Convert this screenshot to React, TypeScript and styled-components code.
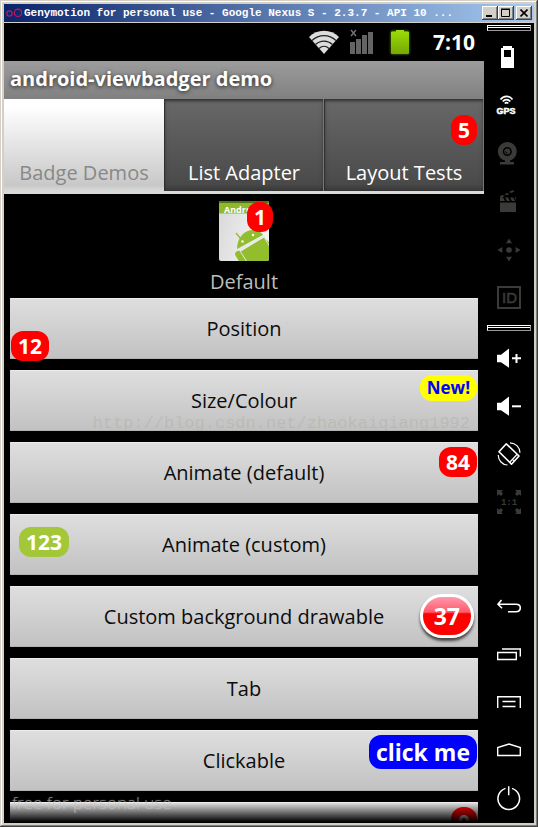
import React from "react";
import styled, { createGlobalStyle, css } from "styled-components";

const GlobalStyle = createGlobalStyle`
  *, *::before, *::after { box-sizing: border-box; }
  body { margin: 0; background: #000; }
  button { margin: 0; padding: 0; border: 0; font: inherit; color: inherit; background: none; cursor: pointer; }
`;

const droid = `"Open Sans", "Noto Sans", sans-serif`;

/* ---------- window frame ---------- */

const Frame = styled.div`
  display: flex;
  flex-direction: column;
  height: 100vh;
  padding: 4px;
  overflow: hidden;
  background: #d4d0c8;
  box-shadow: inset -1px -1px #404040, inset 1px 1px #d4d0c8, inset -2px -2px #808080, inset 2px 2px #fff;
  font-family: ${droid};
`;

const TitleBar = styled.header`
  display: flex;
  align-items: center;
  flex: none;
  height: 18px;
  margin-bottom: 1px;
  padding: 0 2px;
  background: linear-gradient(90deg, #0a246a, #a6caf0);
`;

const WindowTitle = styled.h1`
  flex: 1;
  min-width: 0;
  margin: 0 0 0 1px;
  overflow: hidden;
  white-space: nowrap;
  color: #fff;
  font: bold 11px/18px "Liberation Mono", monospace;
`;

const WindowButton = styled.button<{ $apart?: boolean }>`
  display: grid;
  place-items: center;
  flex: none;
  width: 16px;
  height: 14px;
  margin-left: ${(p) => (p.$apart ? "2px" : "0")};
  background: #d4d0c8;
  box-shadow: inset -1px -1px #404040, inset 1px 1px #fff, inset -2px -2px #808080;
`;

const Client = styled.div`
  display: flex;
  flex: 1;
  min-height: 0;
  background: #000;
`;

/* ---------- phone screen ---------- */

const Screen = styled.main`
  position: relative;
  display: flex;
  flex-direction: column;
  flex: 1;
  min-width: 0;
  overflow: hidden;
`;

const StatusBar = styled.div`
  display: flex;
  align-items: center;
  justify-content: flex-end;
  flex: none;
  height: 38px;
  padding-right: 9px;
`;

const StatusIcon = styled.svg<{ $gap: number }>`
  flex: none;
  margin-right: ${(p) => p.$gap}px;
  overflow: visible;
`;

const Clock = styled.time`
  color: #fff;
  font-size: 21px;
  line-height: 38px;
  font-weight: 700;
`;

const AppTitle = styled.h2`
  flex: none;
  height: 38px;
  margin: 0;
  padding: 0 6px;
  background: linear-gradient(#9c9c9c, #808080);
  color: #fff;
  font-size: 20px;
  line-height: 36px;
  font-weight: 700;
  text-shadow: 0 1px 4px rgba(0, 0, 0, 0.75);
`;

const TabStrip = styled.div`
  display: grid;
  grid-template-columns: repeat(3, 1fr);
  flex: none;
  height: 95px;
  border-bottom: 3px solid #d8dad8;
`;

const TabCell = styled.div`
  position: relative;
  display: grid;
`;

const TabButton = styled.button<{ $active?: boolean }>`
  display: flex;
  align-items: flex-end;
  justify-content: center;
  padding-bottom: 4px;
  font-size: 20px;
  line-height: 28px;
  white-space: nowrap;
  ${(p) =>
    p.$active
      ? css`
          background: linear-gradient(#fff 8%, #c8c8c8 94%, #d8dad8);
          color: #888;
        `
      : css`
          background: linear-gradient(#686868, #484848);
          box-shadow: inset 1px 0 #303030, inset -1px 0 #777, inset 0 2px 3px #303030, inset 0 -4px 6px -2px #303030;
          color: #fff;
        `}
`;

const List = styled.div`
  display: flex;
  flex-direction: column;
  gap: 11px;
  flex: 1;
  min-height: 0;
  padding: 7px 6px 0;
  overflow: hidden;
`;

const DefaultItem = styled.div`
  display: flex;
  flex-direction: column;
  align-items: center;
  flex: none;
  height: 86px;
`;

const IconHolder = styled.div`
  position: relative;
  width: 50px;
  height: 60px;
`;

const DefaultLabel = styled.div`
  margin-top: 6px;
  color: #bebebe;
  font-size: 20px;
  line-height: 30px;
`;

const Row = styled.div`
  position: relative;
  display: grid;
  flex: none;
  height: 61px;
`;

const RowButton = styled.button`
  border-radius: 1px;
  background: linear-gradient(#dfdfdf, #c1c1c1);
  box-shadow: inset 0 1px #ededed, inset 0 -1px #b2b2b2;
  color: #0c0c0c;
  font-size: 20px;
  line-height: 28px;
`;

type Place = "topRight" | "bottomLeft" | "centerLeft" | "tab" | "icon" | "glossy";

const places: Record<Place, ReturnType<typeof css>> = {
  topRight: css`top: 5px; right: 1px;`,
  bottomLeft: css`bottom: -2px; left: 1px;`,
  centerLeft: css`top: 13px; left: 9px;`,
  tab: css`top: 16px; right: 7px;`,
  icon: css`top: 1px; right: -4px;`,
  glossy: css`top: 8px; right: 4px;`,
};

const badgeLook = css<{ $place: Place; $bg?: string; $ink?: string; $size?: "small" | "large" }>`
  position: absolute;
  ${(p) => places[p.$place]}
  padding: 0 7px;
  border-radius: 12px;
  background: ${(p) => p.$bg ?? "#f00"};
  color: ${(p) => p.$ink ?? "#fff"};
  font-weight: 700;
  white-space: nowrap;
  font-size: ${(p) => (p.$size === "small" ? 17 : p.$size === "large" ? 23 : 21)}px;
  line-height: ${(p) => (p.$size === "small" ? 26 : p.$size === "large" ? 34 : 30)}px;
`;

const Badge = styled.span`
  ${badgeLook}
`;

const BadgeButton = styled.button`
  ${badgeLook}
`;

const GlossyBadge = styled(Badge)`
  padding: 0 11px;
  border: 3px solid #fff;
  border-radius: 24px;
  background: linear-gradient(#ff9aac, #ff5a6c 40%, #f00 44%, #f00);
  box-shadow: 0 3px 3px rgba(0, 0, 0, 0.65);
  font-size: 23px;
  line-height: 38px;
`;

const LinkMark = styled.div`
  position: absolute;
  top: 389px;
  right: 14px;
  color: rgba(165, 168, 150, 0.35);
  font: 17px/24px "Liberation Mono", monospace;
`;

const Fade = styled.div`
  position: absolute;
  right: 0;
  bottom: 0;
  left: 0;
  height: 20px;
  background: linear-gradient(rgba(0, 0, 0, 0), #000 95%);
`;

const LicenceMark = styled.div`
  position: absolute;
  bottom: 8px;
  left: 8px;
  color: rgba(165, 165, 165, 0.55);
  font: 300 17px/24px "Open Sans", sans-serif;
  text-shadow: 0 0 1px rgba(255, 255, 255, 0.5);
`;

/* ---------- tool column ---------- */

const Tools = styled.nav`
  display: flex;
  flex-direction: column;
  flex: none;
  width: 50px;
  padding: 2px 3px 1px;
  color: #fff;
`;

const Grip = styled.div`
  flex: none;
  height: 6px;
  border: 1px solid #999;
  border-top-color: #fff;
  border-left-color: #fff;
  background: linear-gradient(#000 1px, #fff 1px, #fff 2px, #000 2px);
`;

const ToolGroup = styled.div<{ $bottom?: boolean }>`
  display: flex;
  flex-direction: column;
  flex: none;
  padding: ${(p) => (p.$bottom ? "0" : "3px 0")};
  margin-top: ${(p) => (p.$bottom ? "auto" : "0")};
`;

const ToolButton = styled.button<{ $dim?: boolean }>`
  display: grid;
  place-items: center;
  height: 48px;
  color: ${(p) => (p.$dim ? "#3a3a38" : "#fff")};

  svg {
    overflow: visible;
  }
`;

const Glyph = ({ children }: { children: React.ReactNode }) => (
  <svg width="24" height="24" viewBox="0 0 24 24" fill="none" stroke="currentColor" strokeWidth="1.4" aria-hidden="true">
    {children}
  </svg>
);

const solid = { fill: "currentColor", stroke: "none" } as const;

type Tool = { name: string; dim?: boolean; art: React.ReactNode };

const sensors: Tool[] = [
  { name: "Battery", art: <path {...solid} fillRule="evenodd" d="M6 0h9v2h2v20H4V2h2zM7 4v7h7V4z" /> },
  {
    name: "GPS",
    art: (
      <>
        <path strokeWidth="1.7" d="M3.500 5.500c3-4.300 9-4.300 12 0M5.700 7.600c2-2.600 5.600-2.600 7.600 0M7.800 9.500c1-1.300 2.400-1.300 3.400 0" />
        <text {...solid} stroke="currentColor" strokeWidth="0.5" x="-0.5" y="19.500" fontSize="9" fontWeight="700" fontFamily="Liberation Sans, sans-serif">GPS</text>
      </>
    ),
  },
  {
    name: "Camera",
    dim: true,
    art: (
      <>
        <circle cx="10.300" cy="9.500" r="7" strokeWidth="5" />
        <circle {...solid} cx="10.300" cy="9.500" r="3" />
        <path stroke="#000" strokeWidth="1" d="M8.700 9.500a1.700 1.700 0 0 0 1.800 1.600" />
        <path {...solid} d="M8 17h5v3h4v2.500H3V20h5z" />
      </>
    ),
  },
  {
    name: "Capture",
    dim: true,
    art: (
      <path {...solid} d="M3 12.500h16V22H3zM3 7.500h3l2 3.500H3zM8 7.500h3l2 3.500h-3zM13 7.500h3l2 3.500h-3zM17.500 7.500H19V10zM2.500 6.500l3-1.400 2.300 1L4.500 7.800zM7.500 4.200l2.600-1.300 2.300 1-2.800 1.400zM12 2L15.500.3l2 1-3.200 1.700z" />
    ),
  },
  {
    name: "Move",
    dim: true,
    art: (
      <>
        <circle {...solid} cx="12" cy="12" r="2.800" />
        <path {...solid} d="M12 .5l3 4.800H9zM12 23.500l3-4.800H9zM.5 12l4.800-3v6zM23.500 12l-4.800-3v6z" />
      </>
    ),
  },
  {
    name: "Identifiers",
    dim: true,
    art: (
      <>
        <rect x="1" y="1" width="22" height="21" strokeWidth="2" />
        <text {...solid} stroke="currentColor" strokeWidth="0.6" x="5" y="17" fontSize="15" fontFamily="Liberation Sans, sans-serif">ID</text>
      </>
    ),
  },
];

const speaker = <path {...solid} d="M0 8.700h4L12 2.500v19.300L4 16.300H0z" />;

const actions: Tool[] = [
  { name: "Volume up", art: <>{speaker}<path strokeWidth="2" d="M15 12.300h9M19.500 8v9" /></> },
  { name: "Volume down", art: <>{speaker}<path strokeWidth="2" d="M15 12.300h9" /></> },
  {
    name: "Rotate",
    art: (
      <>
        <path strokeWidth="1.600" strokeLinejoin="round" d="M9.300 1.800L2 9.800 14.500 22.200 22 14z" />
        <path strokeWidth="1.200" d="M12.500 20.500l7.500-8M13 .8c5.800.2 10 4.600 10 10M1.200 13c.2 5.500 4 9.800 9.300 10M16 18.800l.8-.9" />
      </>
    ),
  },
  {
    name: "Pixel perfect",
    dim: true,
    art: (
      <>
        <path {...solid} d="M0 0h6L4.300 1.700 6 3.800 4 6 1.800 4.200 0 6zM24 0h-6l1.700 1.700L18 3.800 20 6l2.200-1.800L24 6zM0 24h6l-1.700-1.700L6 20.200 4 18l-2.200 1.800L0 18zM24 24h-6l1.700-1.700L18 20.200 20 18l2.200 1.800L24 18z" />
        <text {...solid} x="12" y="15" textAnchor="middle" fontSize="9" fontWeight="700" fontFamily="Liberation Mono, monospace">1:1</text>
      </>
    ),
  },
];

const keys: Tool[] = [
  { name: "Back", art: <path strokeWidth="1.600" d="M4.500 6L1 10.200l4 4M1 10.200h18c2.500 0 4.300 1.300 4.300 3.600 0 2.400-1.800 3.900-4.300 3.900h-8" /> },
  { name: "Recent apps", art: <path d="M.7 10.500h18.600v7H.7zM5 7h18.300v7.500" /> },
  { name: "Menu", art: <path d="M.7 18V6.700h22.600V18M5.500 11.500h13M5.500 16.500h13" /> },
  { name: "Home", art: <path d="M.7 17.500V9.500L12 6l11.300 3.500v8z" /> },
  { name: "Power", art: <path strokeWidth="1.500" d="M8.500 2.400a10.800 10.800 0 1 0 6.500 0M11.700.3v9" /> },
];

const ToolList = ({ items, bottom }: { items: Tool[]; bottom?: boolean }) => (
  <ToolGroup $bottom={bottom}>
    {items.map((t) => (
      <ToolButton key={t.name} $dim={t.dim} aria-label={t.name}>
        <Glyph>{t.art}</Glyph>
      </ToolButton>
    ))}
  </ToolGroup>
);

const AndroidFile = () => (
  <svg width="50" height="60" viewBox="0 0 50 60" aria-hidden="true">
    <defs>
      <linearGradient id="paper" x2="1" y2="0.300">
        <stop offset="0" stopColor="#d8d8d8" />
        <stop offset="1" stopColor="#f4f4f4" />
      </linearGradient>
      <clipPath id="sheet"><rect width="50" height="60" rx="2" /></clipPath>
    </defs>
    <g clipPath="url(#sheet)">
      <rect width="50" height="60" fill="url(#paper)" />
      <rect width="50" height="12.500" fill="#8fb82c" />
      <rect width="50" height="2" fill="#4e7418" />
      <text x="5" y="12" fill="#fff" fontSize="9" fontWeight="700" fontFamily="Open Sans, sans-serif">Android</text>
      <g fill="#92be2d">
        <path d="M18 48C18 36 26 29 34 29c5 0 8 2 10 5z" />
        <path d="M21 51l24-14.500 9 8V62H29z" />
        <rect x="16" y="50" width="7" height="18" rx="3.500" transform="rotate(-32 19 53)" />
      </g>
      <path d="M17 32l5 6M36 22l-1 7" stroke="#92be2d" strokeWidth="1.300" />
      <path d="M18 49.500l28-14.500" stroke="#e8e8e8" strokeWidth="1.500" />
      <path d="M21 50l9 14M45 36l6 10" stroke="#e8e8e8" />
      <circle cx="23.500" cy="40.500" r="1.200" fill="#fff" />
      <circle cx="34" cy="34" r="1.200" fill="#fff" />
    </g>
  </svg>
);

export default function App() {
  return (
    <Frame>
      <GlobalStyle />
      <TitleBar>
        <svg width="17" height="14" viewBox="0 0 17 14" fill="none" stroke="#c2185b" strokeWidth="1.200" aria-hidden="true">
          <circle cx="3.500" cy="7.500" r="2.700" />
          <circle cx="12" cy="6.800" r="3.700" />
        </svg>
        <WindowTitle>Genymotion for personal use - Google Nexus S - 2.3.7 - API 10 ...</WindowTitle>
        <WindowButton aria-label="Minimize">
          <svg width="10" height="8"><path d="M1 7h6" stroke="#000" strokeWidth="2" /></svg>
        </WindowButton>
        <WindowButton aria-label="Maximize">
          <svg width="10" height="10"><path d="M.5 1.500h8v7h-8zM0 1h9" stroke="#000" fill="none" /></svg>
        </WindowButton>
        <WindowButton $apart aria-label="Close">
          <svg width="8" height="8"><path d="M.5.5l7 7M7.500.5l-7 7" stroke="#000" strokeWidth="1.600" /></svg>
        </WindowButton>
      </TitleBar>
      <Client>
        <Screen>
          <StatusBar>
            <StatusIcon $gap={11} width="30" height="24" viewBox="0 0 30 24" aria-label="Wi-Fi">
              <path d="M15 24L0 7C8-1.500 22-1.500 30 7z" fill="#dcdcdc" />
              <path d="M3 10.500c7-6.500 17-6.500 24 0M6.500 14.500c5-4.600 12-4.600 17 0M10 18.500c3-2.800 7-2.800 10 0" stroke="#222" strokeWidth="1.300" fill="none" />
            </StatusIcon>
            <StatusIcon $gap={17} width="24" height="24" viewBox="0 0 24 24" aria-label="No signal">
              <path d="M0 12h5v12H0zM6 9h5v15H6zM12 5h5v19h-5zM18 2h5v22h-5z" fill="#646464" />
              <path d="M1 0l5 6M6 0L1 6" stroke="#777" strokeWidth="1.300" />
            </StatusIcon>
            <StatusIcon $gap={24} width="18" height="24" viewBox="0 0 18 24" aria-label="Battery full">
              <defs>
                <linearGradient id="charge" x2="0" y2="1">
                  <stop offset="0" stopColor="#9bdc0a" />
                  <stop offset="1" stopColor="#76a800" />
                </linearGradient>
                <filter id="glow" x="-30%" y="-30%" width="160%" height="160%"><feGaussianBlur stdDeviation="1.500" /></filter>
              </defs>
              <rect y="1" width="18" height="23" fill="#5c8800" filter="url(#glow)" />
              <path d="M5 0h8v1.500h4q1 0 1 1V23q0 1-1 1H1q-1 0-1-1V2.500q0-1 1-1h4z" fill="url(#charge)" />
            </StatusIcon>
            <Clock>7:10</Clock>
          </StatusBar>
          <AppTitle>android-viewbadger demo</AppTitle>
          <TabStrip role="tablist">
            <TabCell><TabButton $active role="tab" aria-selected>Badge Demos</TabButton></TabCell>
            <TabCell><TabButton role="tab">List Adapter</TabButton></TabCell>
            <TabCell>
              <TabButton role="tab">Layout Tests</TabButton>
              <Badge $place="tab">5</Badge>
            </TabCell>
          </TabStrip>
          <List>
            <DefaultItem>
              <IconHolder>
                <AndroidFile />
                <Badge $place="icon">1</Badge>
              </IconHolder>
              <DefaultLabel>Default</DefaultLabel>
            </DefaultItem>
            <Row><RowButton>Position</RowButton><Badge $place="bottomLeft">12</Badge></Row>
            <Row>
              <RowButton>Size/Colour</RowButton>
              <Badge $place="topRight" $bg="#ff0" $ink="#00f" $size="small">New!</Badge>
            </Row>
            <Row><RowButton>Animate (default)</RowButton><Badge $place="topRight">84</Badge></Row>
            <Row><RowButton>Animate (custom)</RowButton><Badge $place="centerLeft" $bg="#a4c639">123</Badge></Row>
            <Row><RowButton>Custom background drawable</RowButton><GlossyBadge $place="glossy">37</GlossyBadge></Row>
            <Row><RowButton>Tab</RowButton></Row>
            <Row>
              <RowButton>Clickable</RowButton>
              <BadgeButton $place="topRight" $bg="#00f" $size="large">click me</BadgeButton>
            </Row>
            <Row><RowButton aria-label="Increment" /><Badge $place="topRight">0</Badge></Row>
          </List>
          <LinkMark>http://blog.csdn.net/zhaokaiqiang1992</LinkMark>
          <Fade />
          <LicenceMark>free for personal use</LicenceMark>
        </Screen>
        <Tools aria-label="Device controls">
          <Grip />
          <ToolList items={sensors} />
          <Grip />
          <ToolList items={actions} />
          <ToolList items={keys} bottom />
        </Tools>
      </Client>
    </Frame>
  );
}
